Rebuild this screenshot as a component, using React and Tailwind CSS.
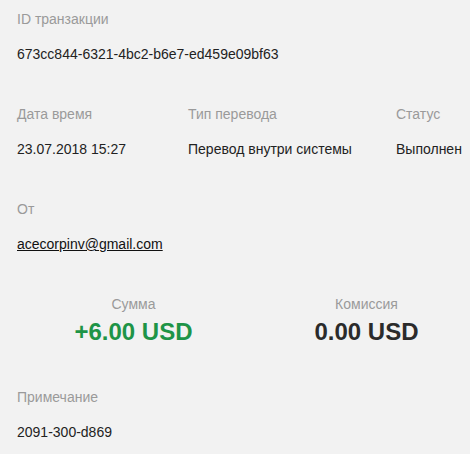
const Field = ({ label, children, className = '' }) => (
  <div className={className}>
    <div className="text-[14px] leading-5 text-[#9a9a9a]">{label}</div>
    <div className="mt-[15px] text-[14px] leading-5 text-[#222]">{children}</div>
  </div>
)

const App = () => {
  return (
    <div className="w-[470px] h-[454px] overflow-hidden bg-[#f2f2f2] font-['Liberation_Sans',Arial,sans-serif]">
      <div className="pl-[17px] pt-[9px]">
        <Field label="ID транзакции">673cc844-6321-4bc2-b6e7-ed459e09bf63</Field>

        <div className="mt-[40px] grid grid-cols-[171px_208px_1fr]">
          <Field label="Дата время">23.07.2018 15:27</Field>
          <Field label="Тип перевода">Перевод внутри системы</Field>
          <Field label="Статус">Выполнен</Field>
        </div>

        <Field label="От" className="mt-[40px]">
          <a href="#" className="underline text-[#111]">acecorpinv@gmail.com</a>
        </Field>

        <div className="mt-[40px] grid grid-cols-[233px_233px] text-center">
          <div>
            <div className="text-[14px] leading-5 text-[#9a9a9a]">Сумма</div>
            <div className="mt-[2px] text-[24px] leading-8 font-bold text-[#1e9447]">+6.00 USD</div>
          </div>
          <div>
            <div className="text-[14px] leading-5 text-[#9a9a9a]">Комиссия</div>
            <div className="mt-[2px] text-[24px] leading-8 font-bold text-[#2b2b2b]">0.00 USD</div>
          </div>
        </div>

        <Field label="Примечание" className="mt-[39px]">2091-300-d869</Field>
      </div>
    </div>
  )
}

export default App
